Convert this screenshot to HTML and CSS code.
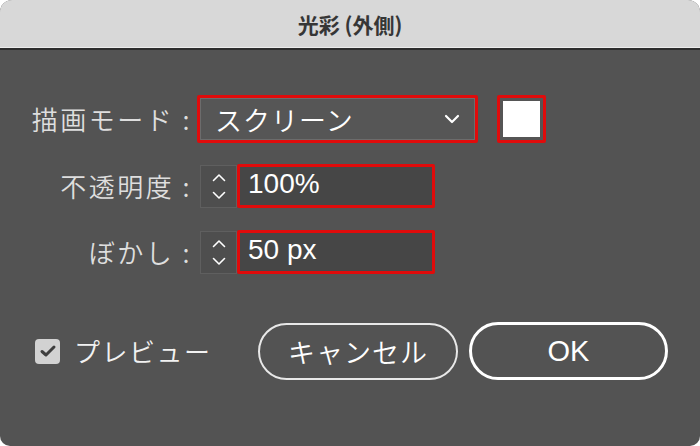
FILE: index.html
```html
<!DOCTYPE html>
<html lang="ja">
<head>
<meta charset="utf-8">
<link rel="stylesheet" href="styles.css">
</head>
<body>
<div class="dialog">
  <div class="titlebar">光彩 (外側)</div>
  <div class="content">
    <div class="row row-mode">
      <div class="label">描画モード :</div>
      <div class="select mark">
        <div class="select-inner">
          <span class="select-value">スクリーン</span>
          <svg class="chev" width="16" height="10" viewBox="0 0 16 10"><path d="M2 2 L8 8 L14 2" fill="none" stroke="#fff" stroke-width="2.2" stroke-linecap="round" stroke-linejoin="round"/></svg>
        </div>
      </div>
      <div class="swatch mark"><div class="swatch-fill"></div></div>
    </div>
    <div class="row row-num">
      <div class="label">不透明度 :</div>
      <div class="spinner">
        <svg width="14" height="9" viewBox="0 0 14 9"><path d="M1.5 7.5 L7 2 L12.5 7.5" fill="none" stroke="#fff" stroke-width="1.6" stroke-linecap="round" stroke-linejoin="round"/></svg>
        <svg width="14" height="9" viewBox="0 0 14 9"><path d="M1.5 1.5 L7 7 L12.5 1.5" fill="none" stroke="#fff" stroke-width="1.6" stroke-linecap="round" stroke-linejoin="round"/></svg>
      </div>
      <div class="field mark">100%</div>
    </div>
    <div class="row row-num row-blur">
      <div class="label">ぼかし :</div>
      <div class="spinner">
        <svg width="14" height="9" viewBox="0 0 14 9"><path d="M1.5 7.5 L7 2 L12.5 7.5" fill="none" stroke="#fff" stroke-width="1.6" stroke-linecap="round" stroke-linejoin="round"/></svg>
        <svg width="14" height="9" viewBox="0 0 14 9"><path d="M1.5 1.5 L7 7 L12.5 1.5" fill="none" stroke="#fff" stroke-width="1.6" stroke-linecap="round" stroke-linejoin="round"/></svg>
      </div>
      <div class="field mark">50 px</div>
    </div>
    <div class="row row-actions">
      <div class="preview">
        <span class="checkbox">
          <svg width="18" height="14" viewBox="0 0 18 14"><path d="M3 7.5 L7 11 L15 3" fill="none" stroke="#3e3e3e" stroke-width="3" stroke-linecap="round" stroke-linejoin="round"/></svg>
        </span>
        <span class="preview-text">プレビュー</span>
      </div>
      <div class="btn btn-cancel">キャンセル</div>
      <div class="btn btn-ok">OK</div>
    </div>
  </div>
</div>
</body>
</html>
```
FILE: styles.css
```css
html, body {
  margin: 0;
  padding: 0;
  background: #ffffff;
}
body {
  font-family: "Noto Sans CJK JP", "Noto Sans", sans-serif;
  font-weight: 350;
}
.dialog {
  width: 700px;
  height: 446px;
  border-radius: 12px 12px 10px 10px;
  overflow: hidden;
  background: #535353;
  display: flex;
  flex-direction: column;
}
.titlebar {
  flex: none;
  background: #d8d8d8;
  border-bottom: 1px solid #ededed;
  color: #363636;
  font-weight: bold;
  font-size: 21px;
  display: flex;
  align-items: center;
  justify-content: center;
  padding-top: 1px;
  box-sizing: border-box;
  height: 48px;
}
.content {
  flex: 1;
  border-top: 2px solid #2e2e2e;
  display: flex;
  flex-direction: column;
}
.row {
  display: flex;
  align-items: center;
}
.label {
  width: 192px;
  padding-right: 5px;
  text-align: right;
  color: #dedede;
  font-size: 26px;
  line-height: 1;
  flex: none;
  letter-spacing: 2.5px;
}
.mark {
  border: 3px solid #e00b0b;
  border-radius: 2px;
  box-sizing: border-box;
}
.row-mode {
  margin-top: 45px;
  height: 48px;
}
.select {
  width: 281px;
  height: 48px;
}
.select-inner {
  height: 100%;
  box-sizing: border-box;
  border: 1px solid #6c6c6c;
  background: #565656;
  display: flex;
  align-items: center;
  justify-content: space-between;
  padding: 0 14px 0 14px;
}
.select-value {
  color: #ffffff;
  font-size: 27px;
  line-height: 1;
  letter-spacing: 1px;
}
.chev {
  display: block;
}
.swatch {
  margin-left: 19px;
  width: 49px;
  height: 48px;
  padding: 3px;
  background: #555;
}
.swatch-fill {
  width: 100%;
  height: 100%;
  background: #ffffff;
}
.row-num {
  margin-top: 21px;
  height: 44px;
}
.row-blur {
  margin-top: 22px;
}
.spinner {
  margin-left: 3px;
  width: 37px;
  height: 43px;
  box-sizing: border-box;
  background: #4e4e4e;
  border: 1px solid #5f5f5f;
  display: flex;
  flex-direction: column;
  align-items: center;
  justify-content: center;
  gap: 9px;
}
.spinner svg {
  display: block;
}
.field {
  width: 198px;
  height: 44px;
  background: #464646;
  color: #ffffff;
  font-family: "Liberation Sans", "Noto Sans CJK JP", sans-serif;
  font-weight: normal;
  font-size: 28px;
  line-height: 1;
  padding: 4px 0 0 8px;
  display: flex;
  align-items: center;
  padding-bottom: 8px;
}
.row-actions {
  margin-top: 48px;
  padding-left: 35px;
  height: 58px;
}
.preview {
  display: flex;
  align-items: center;
  width: 223px;
  flex: none;
}
.checkbox {
  width: 25px;
  height: 25px;
  border-radius: 4px;
  background: #d2d2d2;
  display: flex;
  align-items: center;
  justify-content: center;
  flex: none;
}
.preview-text {
  margin-left: 14px;
  color: #f2f2f2;
  font-size: 26px;
  line-height: 1;
  letter-spacing: 1.5px;
}
.btn {
  box-sizing: border-box;
  border-radius: 29px;
  color: #ffffff;
  display: flex;
  align-items: center;
  justify-content: center;
  line-height: 1;
}
.btn-cancel {
  width: 200px;
  height: 57px;
  border: 2px solid #e8e8e8;
  font-size: 27px;
  letter-spacing: 1px;
}
.btn-ok {
  margin-left: 11px;
  width: 199px;
  height: 58px;
  border: 3px solid #ffffff;
  font-family: "Liberation Sans", "Noto Sans CJK JP", sans-serif;
  font-weight: normal;
  font-size: 29px;
}
```
